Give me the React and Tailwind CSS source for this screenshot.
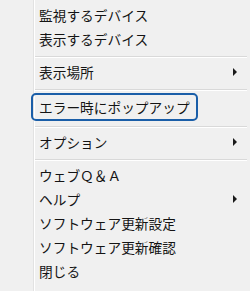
import React from 'react';

const Arrow = () => (
  <span className="ml-auto mr-[10px] h-0 w-0 border-y-[4px] border-l-[4px] border-y-transparent border-l-[#1a1a1a]" />
);

const Item = ({ label, sub, focused }) => (
  <div
    className={
      focused
        ? 'flex h-[28px] items-center -ml-[4px] mr-[49px] pl-[6px] rounded-[5px] border-2 border-[#1a5ea8]'
        : 'flex h-[24px] items-center pl-[4px]'
    }
  >
    <span className="whitespace-nowrap">{label}</span>
    {sub && <Arrow />}
  </div>
);

const Separator = () => (
  <div className="h-[9px] pt-[5px]">
    <div className="h-px bg-[#d9d9d9]" />
    <div className="h-px bg-white" />
  </div>
);

const menu = [
  { label: '監視するデバイス' },
  { label: '表示するデバイス' },
  { sep: true },
  { label: '表示場所', sub: true },
  { sep: true },
  { label: 'エラー時にポップアップ', focused: true },
  { sep: true },
  { label: 'オプション', sub: true },
  { sep: true },
  { label: 'ウェブＱ＆Ａ' },
  { label: 'ヘルプ', sub: true },
  { label: 'ソフトウェア更新設定' },
  { label: 'ソフトウェア更新確認' },
  { label: '閉じる' },
];

export default function App() {
  return (
    <div
      className="flex h-[291px] w-[250px] bg-[#f0f0f0] text-[13.7px] text-[#141414]"
      style={{ fontFamily: '"Noto Sans CJK JP", "Noto Sans", sans-serif' }}
    >
      <div className="w-[33px] shrink-0" />
      <div className="flex flex-1 border-l border-[#e2e2e2]">
        <div className="flex flex-1 flex-col border-l border-white pt-[3px] pr-[3px]">
          {menu.map((m, i) =>
            m.sep ? <Separator key={i} /> : <Item key={i} {...m} />
          )}
        </div>
      </div>
    </div>
  );
}
